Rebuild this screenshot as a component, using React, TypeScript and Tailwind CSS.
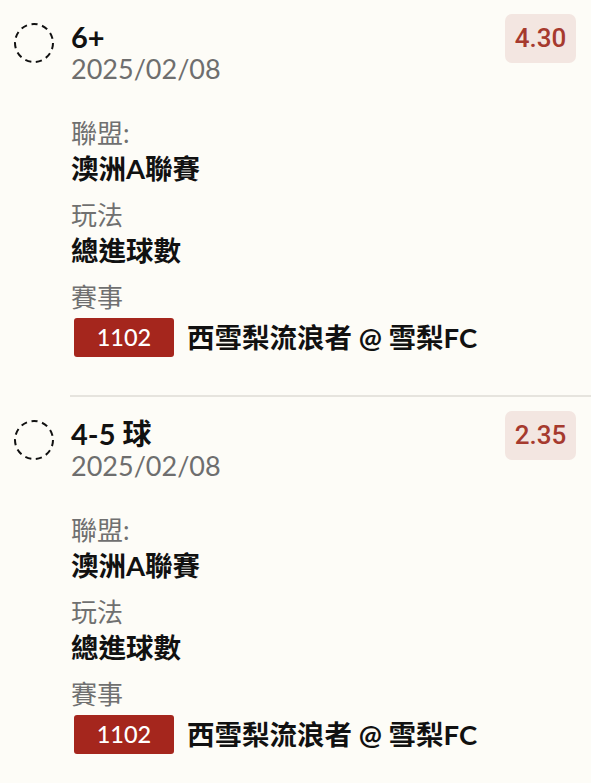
import React from 'react';

type Bet = {
  pick: string;
  date: string;
  odds: string;
  league: string;
  market: string;
  matchNo: string;
  match: string;
};

const bets: Bet[] = [
  {
    pick: '6+',
    date: '2025/02/08',
    odds: '4.30',
    league: '澳洲A聯賽',
    market: '總進球數',
    matchNo: '1102',
    match: '西雪梨流浪者 @ 雪梨FC',
  },
  {
    pick: '4-5 球',
    date: '2025/02/08',
    odds: '2.35',
    league: '澳洲A聯賽',
    market: '總進球數',
    matchNo: '1102',
    match: '西雪梨流浪者 @ 雪梨FC',
  },
];

const font = "font-['Lato','Noto_Sans_CJK_TC',sans-serif]";

function DashedCircle() {
  return (
    <svg width="42" height="42" viewBox="0 0 42 42" className="block">
      <circle cx="21" cy="21" r="19" fill="none" stroke="#111" strokeWidth="2" strokeDasharray="6.2 4.6" />
    </svg>
  );
}

function Field({ label, children }: { label: string; children: React.ReactNode }) {
  return (
    <div className="flex flex-col">
      <div className="text-[26px] leading-[35px] text-[#707070]">{label}</div>
      {children}
    </div>
  );
}

function BetRow({ bet }: { bet: Bet }) {
  return (
    <div className="flex pl-[13px] pr-[15px] pt-[14px] pb-[38px]">
      <div className="w-[58px] shrink-0 pt-[8px]">
        <DashedCircle />
      </div>
      <div className="flex-1 flex flex-col">
        <div className="flex items-start justify-between">
          <div className="flex flex-col mt-[6px]">
            <div className="text-[29px] leading-[34px] font-bold text-[#111]">{bet.pick}</div>
            <div className="text-[27px] leading-[30px] text-[#6e6e6e]">{bet.date}</div>
          </div>
          <div className="h-[49px] w-[71px] rounded-[7px] bg-[#f3e6e1] flex items-center justify-center font-['Roboto',sans-serif] font-medium text-[26px] text-[#a63a2e]">
            {bet.odds}
          </div>
        </div>
        <div className="mt-[32px] flex flex-col gap-[12px]">
          <Field label="聯盟:">
            <div className="text-[27.5px] leading-[35px] font-bold text-[#111]">{bet.league}</div>
          </Field>
          <Field label="玩法">
            <div className="text-[27.5px] leading-[35px] font-bold text-[#111]">{bet.market}</div>
          </Field>
          <Field label="賽事">
            <div className="flex items-center gap-[13px] mt-[3px]">
              <div className="ml-[3px] h-[39px] w-[100px] rounded-[3px] bg-[#a5261d] flex items-center justify-center text-white font-medium text-[23.5px]">
                {bet.matchNo}
              </div>
              <div className="text-[27.5px] leading-[35px] font-bold text-[#111]">{bet.match}</div>
            </div>
          </Field>
        </div>
      </div>
    </div>
  );
}

export default function App() {
  return (
    <div className={`min-h-screen w-[591px] bg-[#fdfcf7] ${font}`}>
      {bets.map((b, i) => (
        <div key={i}>
          <BetRow bet={b} />
          {i < bets.length - 1 && <div className="ml-[70px] h-[2px] bg-[#e6e4de]" />}
        </div>
      ))}
    </div>
  );
}
